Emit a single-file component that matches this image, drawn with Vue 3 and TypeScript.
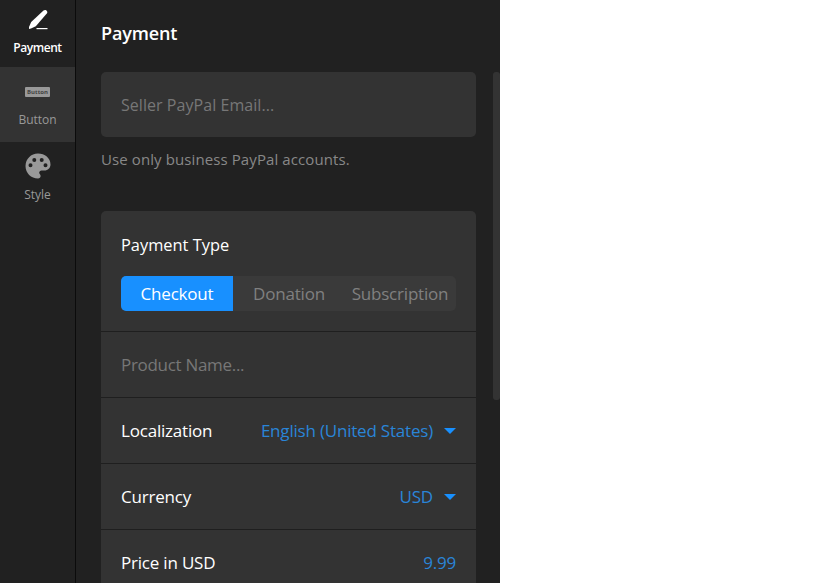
<script setup lang="ts">
const rows = [
  { label: 'Localization', value: 'English (United States)', caret: true },
  { label: 'Currency', value: 'USD', caret: true },
  { label: 'Price in USD', value: '9.99', caret: false },
]
</script>

<template>
  <div class="root">
    <nav class="side">
      <div class="item first active">
        <svg class="ico-pen" width="24" height="24" viewBox="0 0 24 24">
          <path d="M16.500 3.500C18.500 1.800 21.500 4.200 19.800 6.500L8.800 19.200L4 21.500L2 21.900L2 20L4.200 15Z" fill="#fff"/>
          <rect x="9.500" y="21" width="11" height="1.200" fill="#fff"/>
        </svg>
        <span>Payment</span>
      </div>
      <div class="item sel">
        <div class="btn-ico"><span>Button</span></div>
        <span>Button</span>
      </div>
      <div class="item">
        <svg class="ico-pal" width="26" height="26" viewBox="0 0 26 26">
          <path fill="#999" fill-rule="evenodd" d="M13 0.500C6 0.500 0.500 6 0.500 13S6 25.500 13 25.500c1.600 0 2.600-1.100 2.600-2.500 0-.7-.3-1.200-.7-1.700-.4-.5-.7-1-.7-1.600 0-1.300 1-2.300 2.300-2.300h2.900c3.500 0 6.100-2.600 6.100-6C25.500 5 19.800.5 13 .5ZM5.500 14.300a2 2 0 1 1 0-4 2 2 0 0 1 0 4Zm3.800-5.300a2 2 0 1 1 0-4 2 2 0 0 1 0 4Zm7.400 0a2 2 0 1 1 0-4 2 2 0 0 1 0 4Zm3.800 5.300a2 2 0 1 1 0-4 2 2 0 0 1 0 4Z"/>
        </svg>
        <span>Style</span>
      </div>
    </nav>
    <main class="panel">
      <div class="scrollbar"></div>
      <h1>Payment</h1>
      <div class="card email">Seller PayPal Email...</div>
      <p class="hint">Use only business PayPal accounts.</p>
      <section class="card group">
        <div class="type">
          <div class="type-title">Payment Type</div>
          <div class="tabs">
            <div class="tab on">Checkout</div>
            <div class="tab">Donation</div>
            <div class="tab">Subscription</div>
          </div>
        </div>
        <div class="row ph">Product Name...</div>
        <div v-for="r in rows" :key="r.label" class="row">
          <span class="lbl">{{ r.label }}</span>
          <span class="val">{{ r.value }}<i v-if="r.caret" class="caret"></i></span>
        </div>
      </section>
    </main>
  </div>
</template>

<style>
html, body { margin: 0; background: #fff; }
</style>

<style scoped>
.root {
  display: flex;
  width: 830px;
  height: 583px;
  overflow: hidden;
  background: #fff;
  font-family: "Open Sans", "Noto Sans", sans-serif;
}
.side {
  width: 75px;
  flex: none;
  background: #212121;
  border-right: 1px solid #0b0b0b;
}
.item {
  height: 75px;
  box-sizing: border-box;
  display: flex;
  flex-direction: column;
  align-items: center;
  font-size: 12px;
  color: #999;
}
.item.first {
  height: 67px;
  color: #fff;
  font-weight: 600;
  letter-spacing: -0.45px;
  padding-top: 7px;
}
.ico-pen { margin-bottom: 8px; margin-left: 2px; }
.item.sel { background: #333; padding-top: 20px; }
.item.first > span { line-height: 17px; }
.item.sel > span { margin-top: 14px; line-height: 17px; }
.btn-ico {
  width: 25px;
  height: 10px;
  background: #999;
  border-radius: 1px;
  display: flex;
  align-items: center;
  justify-content: center;
}
.btn-ico span { font-size: 6px; font-weight: 700; color: #444; line-height: 10px; }
.item:last-child { padding-top: 11px; }
.item:last-child > span { margin-top: 7px; line-height: 17px; }
.panel {
  position: relative;
  width: 424px;
  flex: none;
  box-sizing: border-box;
  padding: 0 24px 0 25px;
  background: #212121;
  overflow: hidden;
}
.scrollbar {
  position: absolute;
  left: 417px;
  top: 72px;
  width: 7px;
  height: 328px;
  background: #333;
  border-radius: 3px;
}
h1 {
  margin: 0;
  height: 72px;
  box-sizing: border-box;
  padding-top: 20px;
  font-size: 18px;
  line-height: 27px;
  font-weight: 600;
  color: #fff;
  letter-spacing: -0.15px;
}
.card {
  background: #333;
  border-radius: 5px;
}
.email {
  height: 65px;
  display: flex;
  align-items: center;
  padding: 0 20px;
  font-size: 16px;
  color: #777;
  letter-spacing: 0.05px;
}
.hint {
  margin: 12px 0 0;
  height: 62px;
  font-size: 15px;
  line-height: 21px;
  color: #888;
  letter-spacing: 0.1px;
}
.group { width: 375px; }
.type {
  height: 121px;
  box-sizing: border-box;
  padding: 22px 20px 0;
  border-bottom: 1px solid #1f1f1f;
}
.type-title {
  font-size: 16.4px;
  line-height: 24px;
  color: #fff;
}
.tabs {
  display: flex;
  margin-top: 19px;
  height: 35px;
  background: #3a3a3a;
  border-radius: 5px;
  overflow: hidden;
}
.tab {
  flex: none;
  width: 112px;
  text-align: center;
  line-height: 35px;
  font-size: 17px;
  color: #808080;
  letter-spacing: -0.2px;
}
.tab:last-child { width: 110px; }
.tab.on { background: #1890ff; color: #fff; }
.row {
  height: 66px;
  box-sizing: border-box;
  padding: 0 20px;
  display: flex;
  align-items: center;
  justify-content: space-between;
  border-bottom: 1px solid #1f1f1f;
  font-size: 17px;
  letter-spacing: -0.2px;
}
.ph { color: #777; letter-spacing: -0.3px; }
.lbl { color: #fff; }
.val { color: #2a85d8; display: inline-flex; align-items: center; }
.caret {
  width: 0;
  height: 0;
  margin-left: 11px;
  border-left: 6px solid transparent;
  border-right: 6px solid transparent;
  border-top: 6px solid #1890ff;
}
</style>
